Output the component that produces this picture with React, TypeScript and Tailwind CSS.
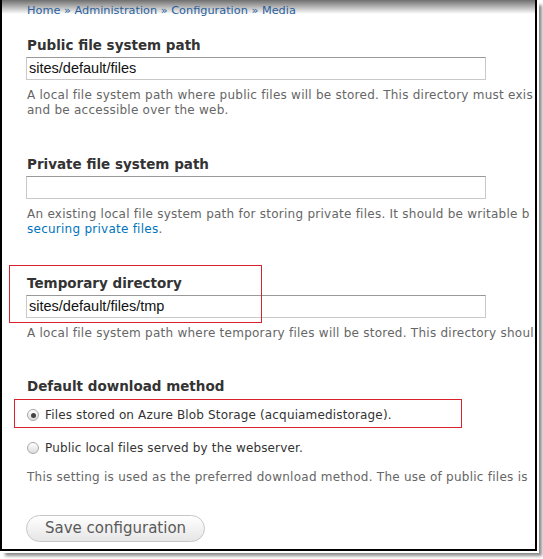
import React from "react";

const sans = { fontFamily: '"DejaVu Sans", Verdana, sans-serif' };

function Label({ children }: { children: React.ReactNode }) {
  return (
    <div className="pl-px h-[18px] leading-[18px] text-[13.5px] font-bold text-[#333] whitespace-nowrap">
      {children}
    </div>
  );
}

function Input({ value }: { value?: string }) {
  return (
    <div
      className="mt-[3px] w-[460px] h-[23px] border border-[#c9c9c9] border-t-[#999] bg-white pl-[2px] leading-[21px] text-[14.5px] text-[#111] whitespace-nowrap"
      style={{ fontFamily: '"Liberation Sans", Arial, sans-serif' }}
    >
      {value}
    </div>
  );
}

function Desc({ children }: { children: React.ReactNode }) {
  return (
    <div className="mt-[8px] pl-px text-[12px] tracking-[0.25px] leading-[15px] text-[#666] whitespace-nowrap">
      {children}
    </div>
  );
}

function Radio({ checked, children }: { checked?: boolean; children: React.ReactNode }) {
  return (
    <div className="flex items-center h-[18px] pl-px whitespace-nowrap">
      <div className="w-[12px] h-[12px] rounded-full border border-[#a9a9a9] bg-gradient-to-b from-white to-[#dcdcdc] flex items-center justify-center">
        {checked && <div className="w-[5px] h-[5px] rounded-full bg-[#444]" />}
      </div>
      <span className="ml-[6px] text-[12px] tracking-[0.15px] text-[#333]">{children}</span>
    </div>
  );
}

export default function App() {
  return (
    <div className="w-[543px] h-[559px] bg-white overflow-hidden" style={sans}>
      <div className="relative w-[537px] h-[551px] border-l-2 border-r-2 border-b-2 border-black bg-[linear-gradient(to_bottom,#6e6e6e_0px,#ffffff_14px)] shadow-[2px_2px_0_0_#ffffff,5px_5px_3px_0_rgba(0,0,0,0.45)]">
        <div className="absolute inset-0 overflow-hidden">
          <div className="pl-[24px]">
            {/* breadcrumb */}
            <div className="pl-px pt-[2px] h-[18px] leading-[17px] text-[11.3px] text-[#2a5f9c] whitespace-nowrap">
              Home » Administration » Configuration » Media
            </div>

            <div className="mt-[18px]">
              <Label>Public file system path</Label>
              <Input value="sites/default/files" />
              <Desc>
                A local file system path where public files will be stored. This directory must exis
                <br />
                and be accessible over the web.
              </Desc>
            </div>

            <div className="mt-[37px]">
              <Label>Private file system path</Label>
              <Input />
              <Desc>
                An existing local file system path for storing private files. It should be writable b
                <br />
                <span className="text-[#0074bd]">securing private files</span>.
              </Desc>
            </div>

            <div className="mt-[37px]">
              <Label>Temporary directory</Label>
              <Input value="sites/default/files/tmp" />
              <Desc>
                A local file system path where temporary files will be stored. This directory shoul
              </Desc>
            </div>

            <div className="mt-[36px]">
              <Label>Default download method</Label>
              <div className="mt-[11px]">
                <Radio checked>Files stored on Azure Blob Storage (acquiamedistorage).</Radio>
              </div>
              <div className="mt-[15px]">
                <Radio>Public local files served by the webserver.</Radio>
              </div>
              <div className="mt-[13px] pl-px text-[12px] tracking-[0.25px] leading-[15px] text-[#666] whitespace-nowrap">
                This setting is used as the preferred download method. The use of public files is
              </div>
            </div>

            <div className="mt-[30px] flex">
              <div className="h-[27px] px-[18px] rounded-full border border-[#c6c6c6] bg-gradient-to-b from-white to-[#e6e6e6] text-[15px] leading-[25px] text-[#5a5a5a] whitespace-nowrap">
                Save configuration
              </div>
            </div>
          </div>

          {/* annotation boxes */}
          <div className="absolute left-[7px] top-[265px] w-[253px] h-[58px] border border-[#d8232c]" />
          <div className="absolute left-[12px] top-[399px] w-[448px] h-[29px] border border-[#d8232c]" />
        </div>
      </div>
    </div>
  );
}
